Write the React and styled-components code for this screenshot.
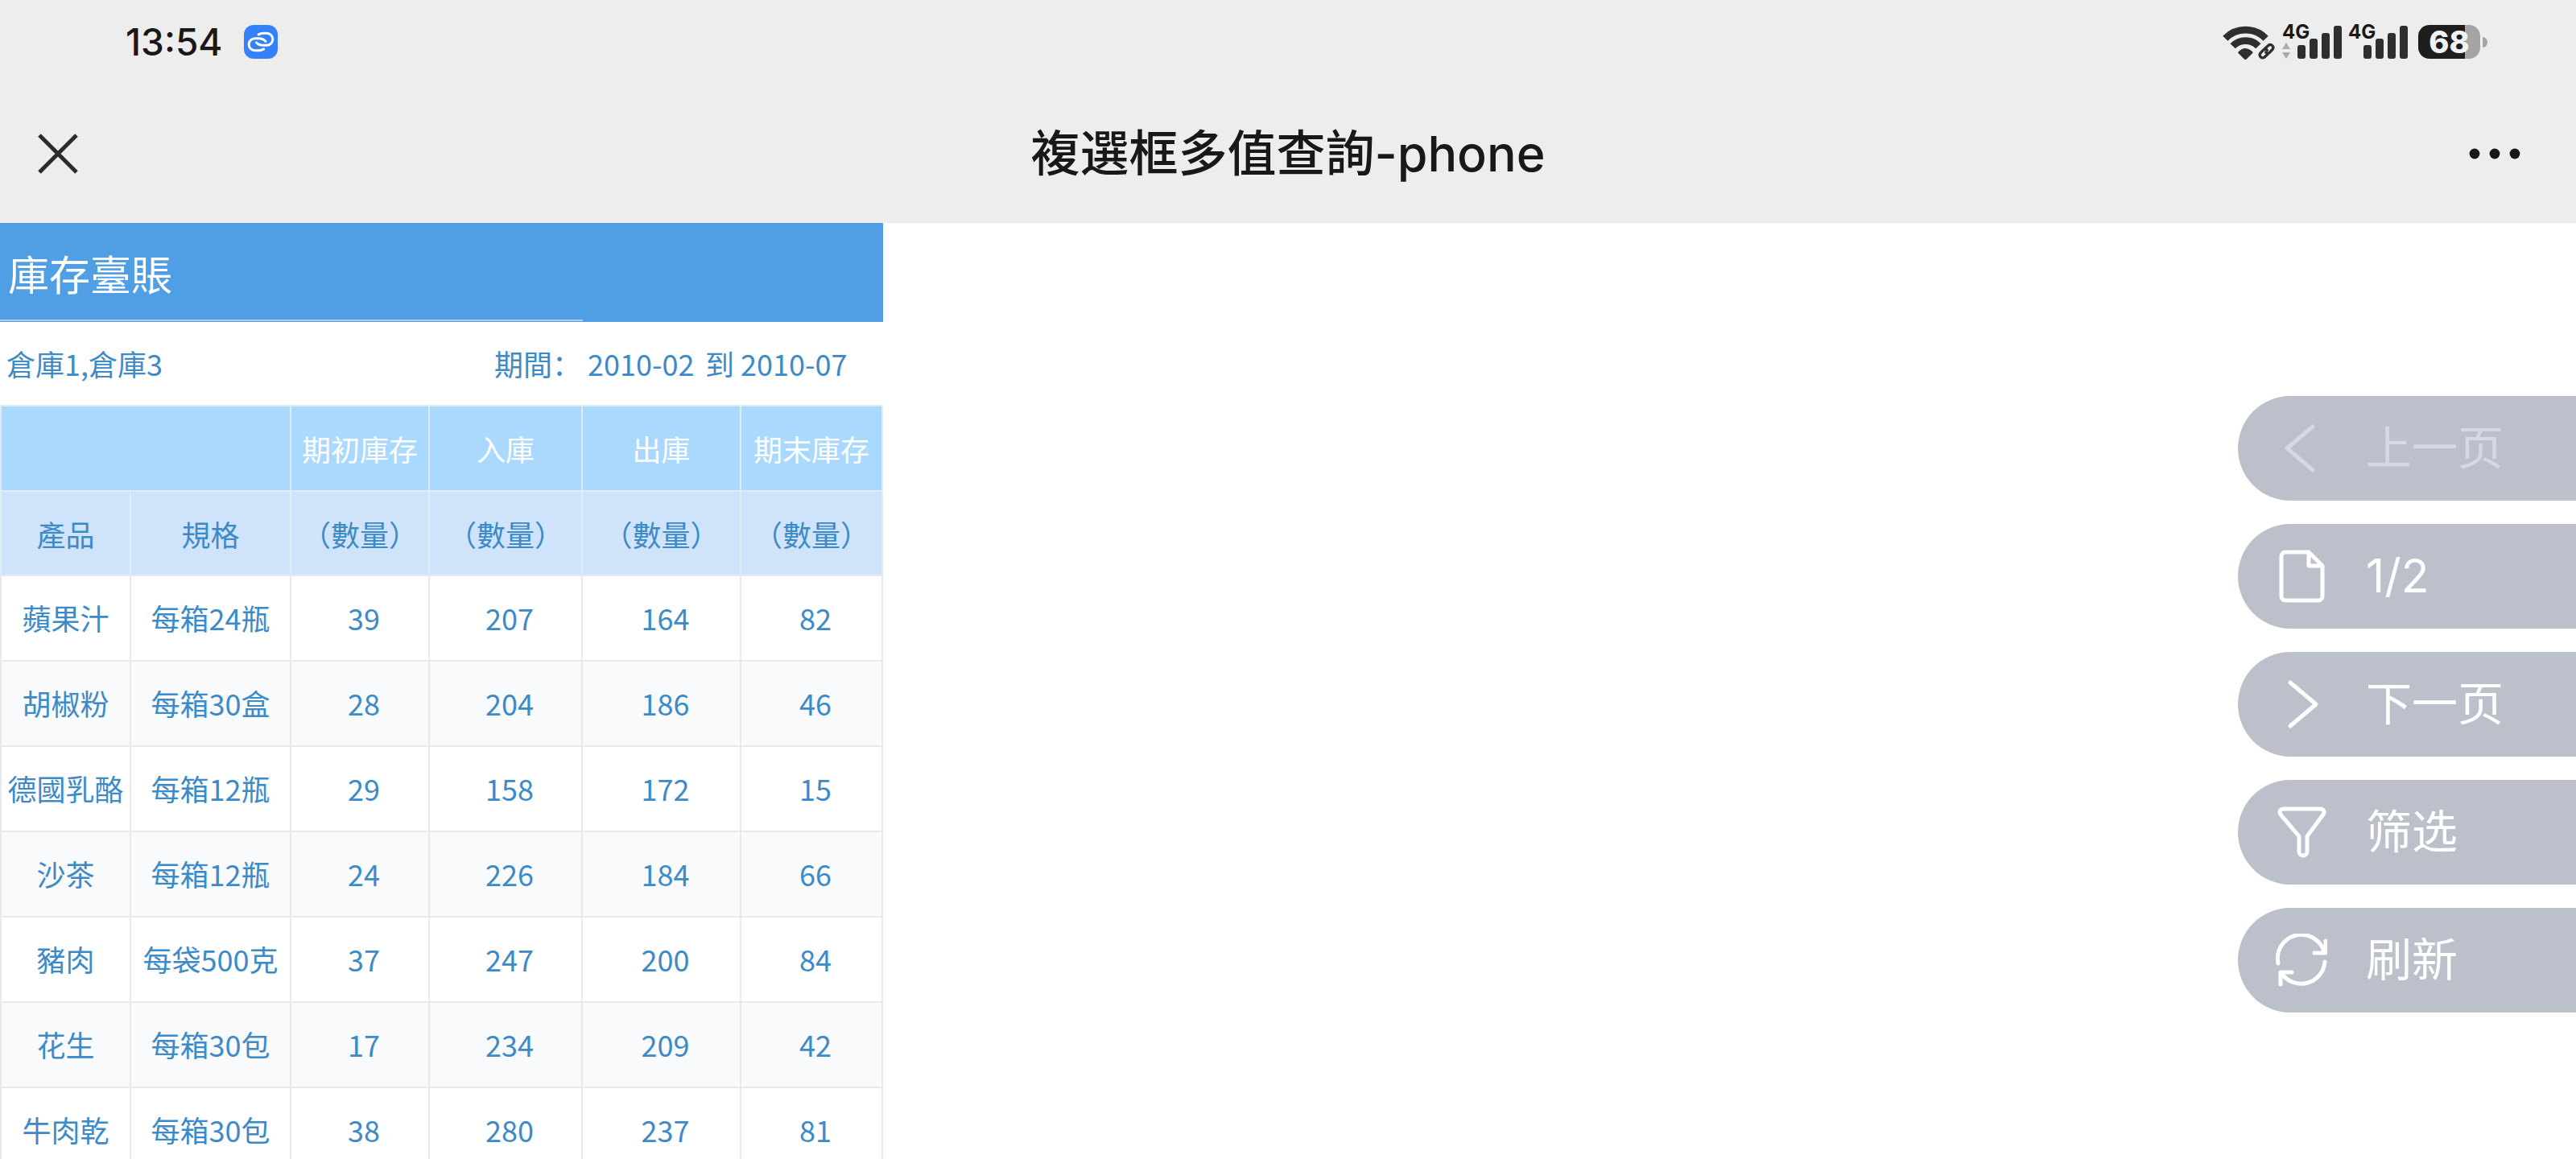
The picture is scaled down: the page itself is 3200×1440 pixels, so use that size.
import React from "react";
import styled, { createGlobalStyle } from "styled-components";

const GlobalStyle = createGlobalStyle`
  * {
    box-sizing: border-box;
  }
  body {
    margin: 0;
    background: #ffffff;
    font-family: "Noto Sans CJK SC", sans-serif;
  }
  button {
    border: none;
    background: none;
    padding: 0;
    font: inherit;
    color: inherit;
  }
`;

const Screen = styled.div`
  display: flex;
  flex-direction: column;
  height: 100vh;
  overflow: hidden;
`;

const Header = styled.header`
  flex: none;
  background: #ededed;
  color: #181818;
`;

const StatusBar = styled.div`
  display: flex;
  justify-content: space-between;
  align-items: center;
  height: 104px;
  padding: 0 110px 0 156px;
  font-family: "Inter", sans-serif;
`;

const StatusGroup = styled.div`
  display: flex;
  align-items: center;
  gap: ${(props) => props.$gap}px;
`;

const Time = styled.time`
  font-size: 46px;
  font-weight: 500;
  line-height: 56px;
`;

const Signal = styled.div`
  position: relative;
  display: flex;
  align-items: flex-end;
  justify-content: flex-end;
  gap: 5px;
  width: 74px;
  height: 42px;
`;

const Network = styled.span`
  position: absolute;
  top: 0;
  left: 0;
  font-size: 24px;
  font-weight: 700;
  line-height: 18px;
`;

const Traffic = styled.svg`
  flex: none;
  width: 10px;
  height: 20px;
  margin-right: 4px;
`;

const Bar = styled.span`
  width: 10px;
  height: ${(props) => props.$height}px;
  border-radius: 3px;
  background: #2e2e2e;
`;

const Battery = styled.div`
  display: flex;
  align-items: center;
  gap: 3px;
  margin-left: 5px;
`;

const BatteryBody = styled.div`
  width: 77px;
  height: 42px;
  border-radius: 14px;
  background: linear-gradient(to right, #1e1e1e 75%, #a5a5a5 75%);
  color: #f2f2f2;
  font-size: 38px;
  font-weight: 800;
  line-height: 43px;
  text-align: center;
`;

const BatteryCap = styled.span`
  width: 6px;
  height: 13px;
  border-radius: 0 6px 6px 0;
  background: #a5a5a5;
`;

const NavBar = styled.div`
  display: grid;
  grid-template-columns: 1fr auto 1fr;
  align-items: center;
  height: 173px;
`;

const NavTitle = styled.h1`
  margin: 0;
  font-family: "Inter", "Noto Sans CJK SC", sans-serif;
  font-size: 61px;
  font-weight: 500;
  line-height: 80px;
`;

const CloseButton = styled.button`
  display: flex;
  justify-self: start;
  margin-left: 47px;
`;

const MoreButton = styled.button`
  display: flex;
  justify-self: end;
  margin-right: 69px;
`;

const Body = styled.main`
  display: flex;
  justify-content: space-between;
  align-items: flex-start;
  flex: 1;
  min-height: 0;
  overflow: hidden;
`;

const Report = styled.section`
  flex: none;
  color: #3d8ac8;
  font-size: 36px;
  line-height: 52px;
`;

const ReportTitle = styled.h2`
  position: relative;
  display: flex;
  align-items: center;
  height: 123px;
  margin: 0;
  padding: 0 10px;
  background: #509fe4;
  color: #ffffff;
  font-size: 51px;
  font-weight: 400;
  &::after {
    content: "";
    position: absolute;
    left: 0;
    bottom: 1px;
    width: 66%;
    height: 2px;
    background: #b4cfea;
  }
`;

const Params = styled.div`
  display: grid;
  grid-template-columns: 1fr 198px 177px;
  align-items: center;
  height: 102px;
  margin-bottom: 1px;
`;

const ParamCell = styled.div`
  display: flex;
  justify-content: space-between;
  padding: 0 8px;
  &:first-child {
    padding-right: 0;
  }
  &:last-child {
    padding: 0;
  }
`;

const Table = styled.table`
  width: 1097px;
  table-layout: fixed;
  border-collapse: collapse;
  text-align: center;
`;

const Col = styled.col`
  width: ${(props) => props.$width}px;
`;

const GroupRow = styled.tr`
  height: 106px;
  background: #a9d9fe;
  color: #ffffff;
`;

const FieldRow = styled.tr`
  height: 105px;
  background: #cfe3fb;
`;

const DataRow = styled.tr`
  height: 106px;
  background: #ffffff;
  &:nth-child(even) {
    background: #f9fafb;
  }
`;

const Th = styled.th`
  padding: 0;
  border: 2px solid #e2eaf2;
  font-weight: 400;
  white-space: nowrap;
`;

const Td = styled.td`
  padding: 0 0 2px ${(props) => (props.$numeric ? 10 : 0)}px;
  border: 2px solid #e7e9eb;
  white-space: nowrap;
`;

const Actions = styled.nav`
  display: flex;
  flex-direction: column;
  gap: 29px;
  width: 420px;
  margin-top: 215px;
`;

const ActionButton = styled.button`
  display: flex;
  align-items: center;
  gap: 48px;
  height: 130px;
  padding-left: 47px;
  border-radius: 65px 0 0 65px;
  background: #bcc0cb;
  color: #ffffff;
  font-family: "Inter", "Noto Sans CJK SC", sans-serif;
  font-size: 57px;
  line-height: 80px;
  &:disabled {
    color: #d5d9e5;
  }
`;

const ActionIcon = styled.svg`
  flex: none;
  width: 64px;
  height: 66px;
  fill: none;
  stroke: currentColor;
  stroke-width: 5;
  stroke-linecap: round;
  stroke-linejoin: round;
`;

const columns = [161, 199, 172, 190, 197, 176];

const groups = ["期初庫存", "入庫", "出庫", "期末庫存"];

const rows = [
  ["蘋果汁", "每箱24瓶", 39, 207, 164, 82],
  ["胡椒粉", "每箱30盒", 28, 204, 186, 46],
  ["德國乳酪", "每箱12瓶", 29, 158, 172, 15],
  ["沙茶", "每箱12瓶", 24, 226, 184, 66],
  ["豬肉", "每袋500克", 37, 247, 200, 84],
  ["花生", "每箱30包", 17, 234, 209, 42],
  ["牛肉乾", "每箱30包", 38, 280, 237, 81],
];

const actions = [
  { label: "上一页", disabled: true, icon: <path d="M46 6 14 33l32 27" /> },
  {
    label: "1/2",
    icon: (
      <path d="M40 3H12a5 5 0 0 0-5 5v50a5 5 0 0 0 5 5h41a5 5 0 0 0 5-5V20L41 3v17h16" />
    ),
  },
  { label: "下一页", icon: <path d="M18 6l32 27-32 27" /> },
  {
    label: "筛选",
    icon: (
      <path d="M10 4h45c5 0 6 4 4 7L39 38v19a5 5 0 0 1-5 5 5 5 0 0 1-5-5V38L6 11C4 8 5 4 10 4Z" />
    ),
  },
  {
    label: "刷新",
    icon: (
      <>
        <path d="M3 37A29.500 29.500 0 0 1 60 22" />
        <path d="M48 24h14V9" />
        <path d="M61 35A29.500 29.500 0 0 1 7 49" />
        <path d="M20 48H6v15" />
      </>
    ),
  },
];

function LinkBadge() {
  return (
    <svg width="42" height="42" viewBox="0 0 126 126" aria-hidden="true">
      <rect width="126" height="126" rx="36" fill="#3580fb" />
      <g
        fill="none"
        stroke="#ffffff"
        strokeWidth="9"
        strokeLinecap="round"
        strokeLinejoin="round"
      >
        <path d="M54 36c6-4 12-5 21-5h10a21 21 0 0 1 0 45H74C61 76 53 73 47 66" />
        <path d="M74 90c-5 3-11 5-19 5H41a21 21 0 0 1 0-45h11c13 0 23 3 29 11" />
      </g>
    </svg>
  );
}

function Wifi() {
  return (
    <svg width="67" height="45" viewBox="180 83 201 135" aria-hidden="true">
      <g fill="none" stroke="#2e2e2e" strokeWidth="26">
        <path d="M193 136a106 106 0 0 1 151 0" />
        <path d="M221 165a66 66 0 0 1 95 0" />
      </g>
      <path
        d="M242 186Q268 160 294 186q3 3 0 6l-21 21q-5 5-10 0l-21-21q-3-3 0-6Z"
        fill="#2e2e2e"
      />
      <g fill="none" strokeLinecap="round">
        <path d="M330 201 364 167" stroke="#ededed" strokeWidth="36" />
        <g stroke="#2e2e2e" strokeWidth="10">
          <path d="M341 174 355 161a11 11 0 0 1 15 15l-11 12a11 11 0 0 1-15 0" />
          <path d="M352 194 338 207a11 11 0 0 1-15-15l11-12a11 11 0 0 1 15 0" />
        </g>
      </g>
    </svg>
  );
}

function SignalMeter({ traffic }) {
  return (
    <Signal>
      <Network>4G</Network>
      {traffic && (
        <Traffic viewBox="0 0 10 20" fill="#a9a9a9" aria-hidden="true">
          <path d="M5 0l5 8H0zM5 20l5-8H0z" />
        </Traffic>
      )}
      <Bar $height={17} />
      <Bar $height={25} />
      <Bar $height={32} />
      <Bar $height={41} />
    </Signal>
  );
}

function App() {
  const renderRows = rows.map((row) => (
    <DataRow key={row[0]}>
      {row.map((value, index) => (
        <Td key={index} $numeric={typeof value === "number"}>
          {value}
        </Td>
      ))}
    </DataRow>
  ));

  return (
    <Screen>
      <GlobalStyle />
      <Header>
        <StatusBar>
          <StatusGroup $gap={26}>
            <Time>13:54</Time>
            <LinkBadge />
          </StatusGroup>
          <StatusGroup $gap={8}>
            <Wifi />
            <SignalMeter traffic />
            <SignalMeter />
            <Battery>
              <BatteryBody>68</BatteryBody>
              <BatteryCap />
            </Battery>
          </StatusGroup>
        </StatusBar>
        <NavBar>
          <CloseButton type="button" aria-label="關閉">
            <svg width="50" height="50" viewBox="0 0 50 50">
              <path d="M2 2 48 48M48 2 2 48" stroke="#2b2b2b" strokeWidth="5" />
            </svg>
          </CloseButton>
          <NavTitle>複選框多值查詢-phone</NavTitle>
          <MoreButton type="button" aria-label="更多">
            <svg width="64" height="14" viewBox="0 0 64 14" fill="#181818">
              <circle cx="7" cy="7" r="6.400" />
              <circle cx="32" cy="7" r="6.400" />
              <circle cx="57" cy="7" r="6.400" />
            </svg>
          </MoreButton>
        </NavBar>
      </Header>
      <Body>
        <Report>
          <ReportTitle>庫存臺賬</ReportTitle>
          <Params>
            <ParamCell>
              <span>倉庫1,倉庫3</span>
              <span>期間：</span>
            </ParamCell>
            <ParamCell>
              <span>2010-02</span>
              <span>到</span>
            </ParamCell>
            <ParamCell>
              <span>2010-07</span>
            </ParamCell>
          </Params>
          <Table>
            <colgroup>
              {columns.map((width, index) => (
                <Col key={index} $width={width} />
              ))}
            </colgroup>
            <thead>
              <GroupRow>
                <Th colSpan={2} />
                {groups.map((group) => (
                  <Th key={group}>{group}</Th>
                ))}
              </GroupRow>
              <FieldRow>
                <Th>產品</Th>
                <Th>規格</Th>
                {groups.map((group) => (
                  <Th key={group}>（數量）</Th>
                ))}
              </FieldRow>
            </thead>
            <tbody>{renderRows}</tbody>
          </Table>
        </Report>
        <Actions>
          {actions.map((action) => (
            <ActionButton
              key={action.label}
              type="button"
              disabled={action.disabled}
            >
              <ActionIcon viewBox="0 0 64 66" aria-hidden="true">
                {action.icon}
              </ActionIcon>
              {action.label}
            </ActionButton>
          ))}
        </Actions>
      </Body>
    </Screen>
  );
}

export default App;
